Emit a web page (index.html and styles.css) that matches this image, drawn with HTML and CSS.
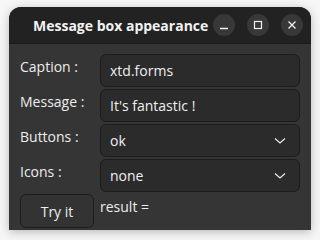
FILE: index.html
```html
<!DOCTYPE html>
<html>
<head>
<meta charset="utf-8">
<link rel="stylesheet" href="styles.css">
</head>
<body>
<div class="window">
  <div class="titlebar">
    <div class="title">Message box appearance</div>
    <div class="controls">
      <span class="ctl"><svg width="22" height="22" viewBox="0 0 22 22"><path d="M7 14.5h8" stroke="#f0f0f0" stroke-width="1.3"/></svg></span>
      <span class="ctl"><svg width="22" height="22" viewBox="0 0 22 22"><rect x="7.5" y="7.5" width="7" height="7" fill="none" stroke="#f0f0f0" stroke-width="1.2"/></svg></span>
      <span class="ctl"><svg width="22" height="22" viewBox="0 0 22 22"><path d="M7.5 7.5l7 7M14.5 7.5l-7 7" stroke="#f0f0f0" stroke-width="1.3"/></svg></span>
    </div>
  </div>
  <div class="content">
    <div class="form">
      <div class="label">Caption :</div>
      <div class="field">xtd.forms</div>
      <div class="label">Message :</div>
      <div class="field">It's fantastic !</div>
      <div class="label">Buttons :</div>
      <div class="field select">ok<svg class="chev" width="12" height="8" viewBox="0 0 12 8"><path d="M1 1.5l5 4.5 5-4.5" fill="none" stroke="#e6e6e6" stroke-width="1.3"/></svg></div>
      <div class="label">Icons :</div>
      <div class="field select">none<svg class="chev" width="12" height="8" viewBox="0 0 12 8"><path d="M1 1.5l5 4.5 5-4.5" fill="none" stroke="#e6e6e6" stroke-width="1.3"/></svg></div>
    </div>
    <div class="bottom">
      <div class="btn">Try it</div>
      <div class="result">result =</div>
    </div>
  </div>
</div>
</body>
</html>
```
FILE: styles.css
```css
html, body {
  margin: 0;
  padding: 0;
}
body {
  background: #f6f6f6;
  width: 320px;
  height: 240px;
  overflow: hidden;
  font-family: "Open Sans", "Noto Sans", sans-serif;
}
.window {
  margin: 7px 0 0 9px;
  width: 302px;
  height: 223px;
  border-radius: 12px 12px 0 0;
  background: #353535;
  box-shadow: 0 2px 10px rgba(0,0,0,0.25);
  overflow: hidden;
}
.titlebar {
  height: 37px;
  background: #222222;
  border-bottom: 1px solid #1a1a1a;
  display: flex;
  align-items: center;
  box-sizing: border-box;
}
.title {
  color: #f2f2f2;
  font-weight: 700;
  font-size: 14px;
  margin-left: 24px;
  flex: 1;
  white-space: nowrap;
}
.controls {
  display: flex;
  gap: 12px;
  margin-right: 8px;
}
.ctl {
  width: 22px;
  height: 22px;
  border-radius: 50%;
  background: #383838;
  display: flex;
}
.content {
  padding: 10px 10px 0 11px;
}
.form {
  display: grid;
  grid-template-columns: 80px 200px;
  grid-auto-rows: 33px;
  row-gap: 2px;
}
.label {
  color: #ececec;
  font-size: 14px;
  padding-top: 3px;
  line-height: 19px;
}
.field {
  box-sizing: border-box;
  background: #2b2b2b;
  border: 1px solid #1c1c1c;
  border-radius: 6px;
  color: #f0f0f0;
  font-size: 14px;
  display: flex;
  align-items: center;
  padding: 0 9px;
}
.select {
  justify-content: space-between;
  padding-right: 13px;
}
.chev {
  display: block;
}
.bottom {
  display: flex;
  margin-top: 2px;
  gap: 6px;
}
.btn {
  box-sizing: border-box;
  width: 74px;
  height: 34px;
  border: 1px solid #1c1c1c;
  border-radius: 6px;
  background: #333333;
  color: #ececec;
  font-size: 14px;
  display: flex;
  align-items: center;
  justify-content: center;
}
.result {
  color: #ececec;
  font-size: 14px;
  line-height: 19px;
  padding-top: 3px;
}
```
